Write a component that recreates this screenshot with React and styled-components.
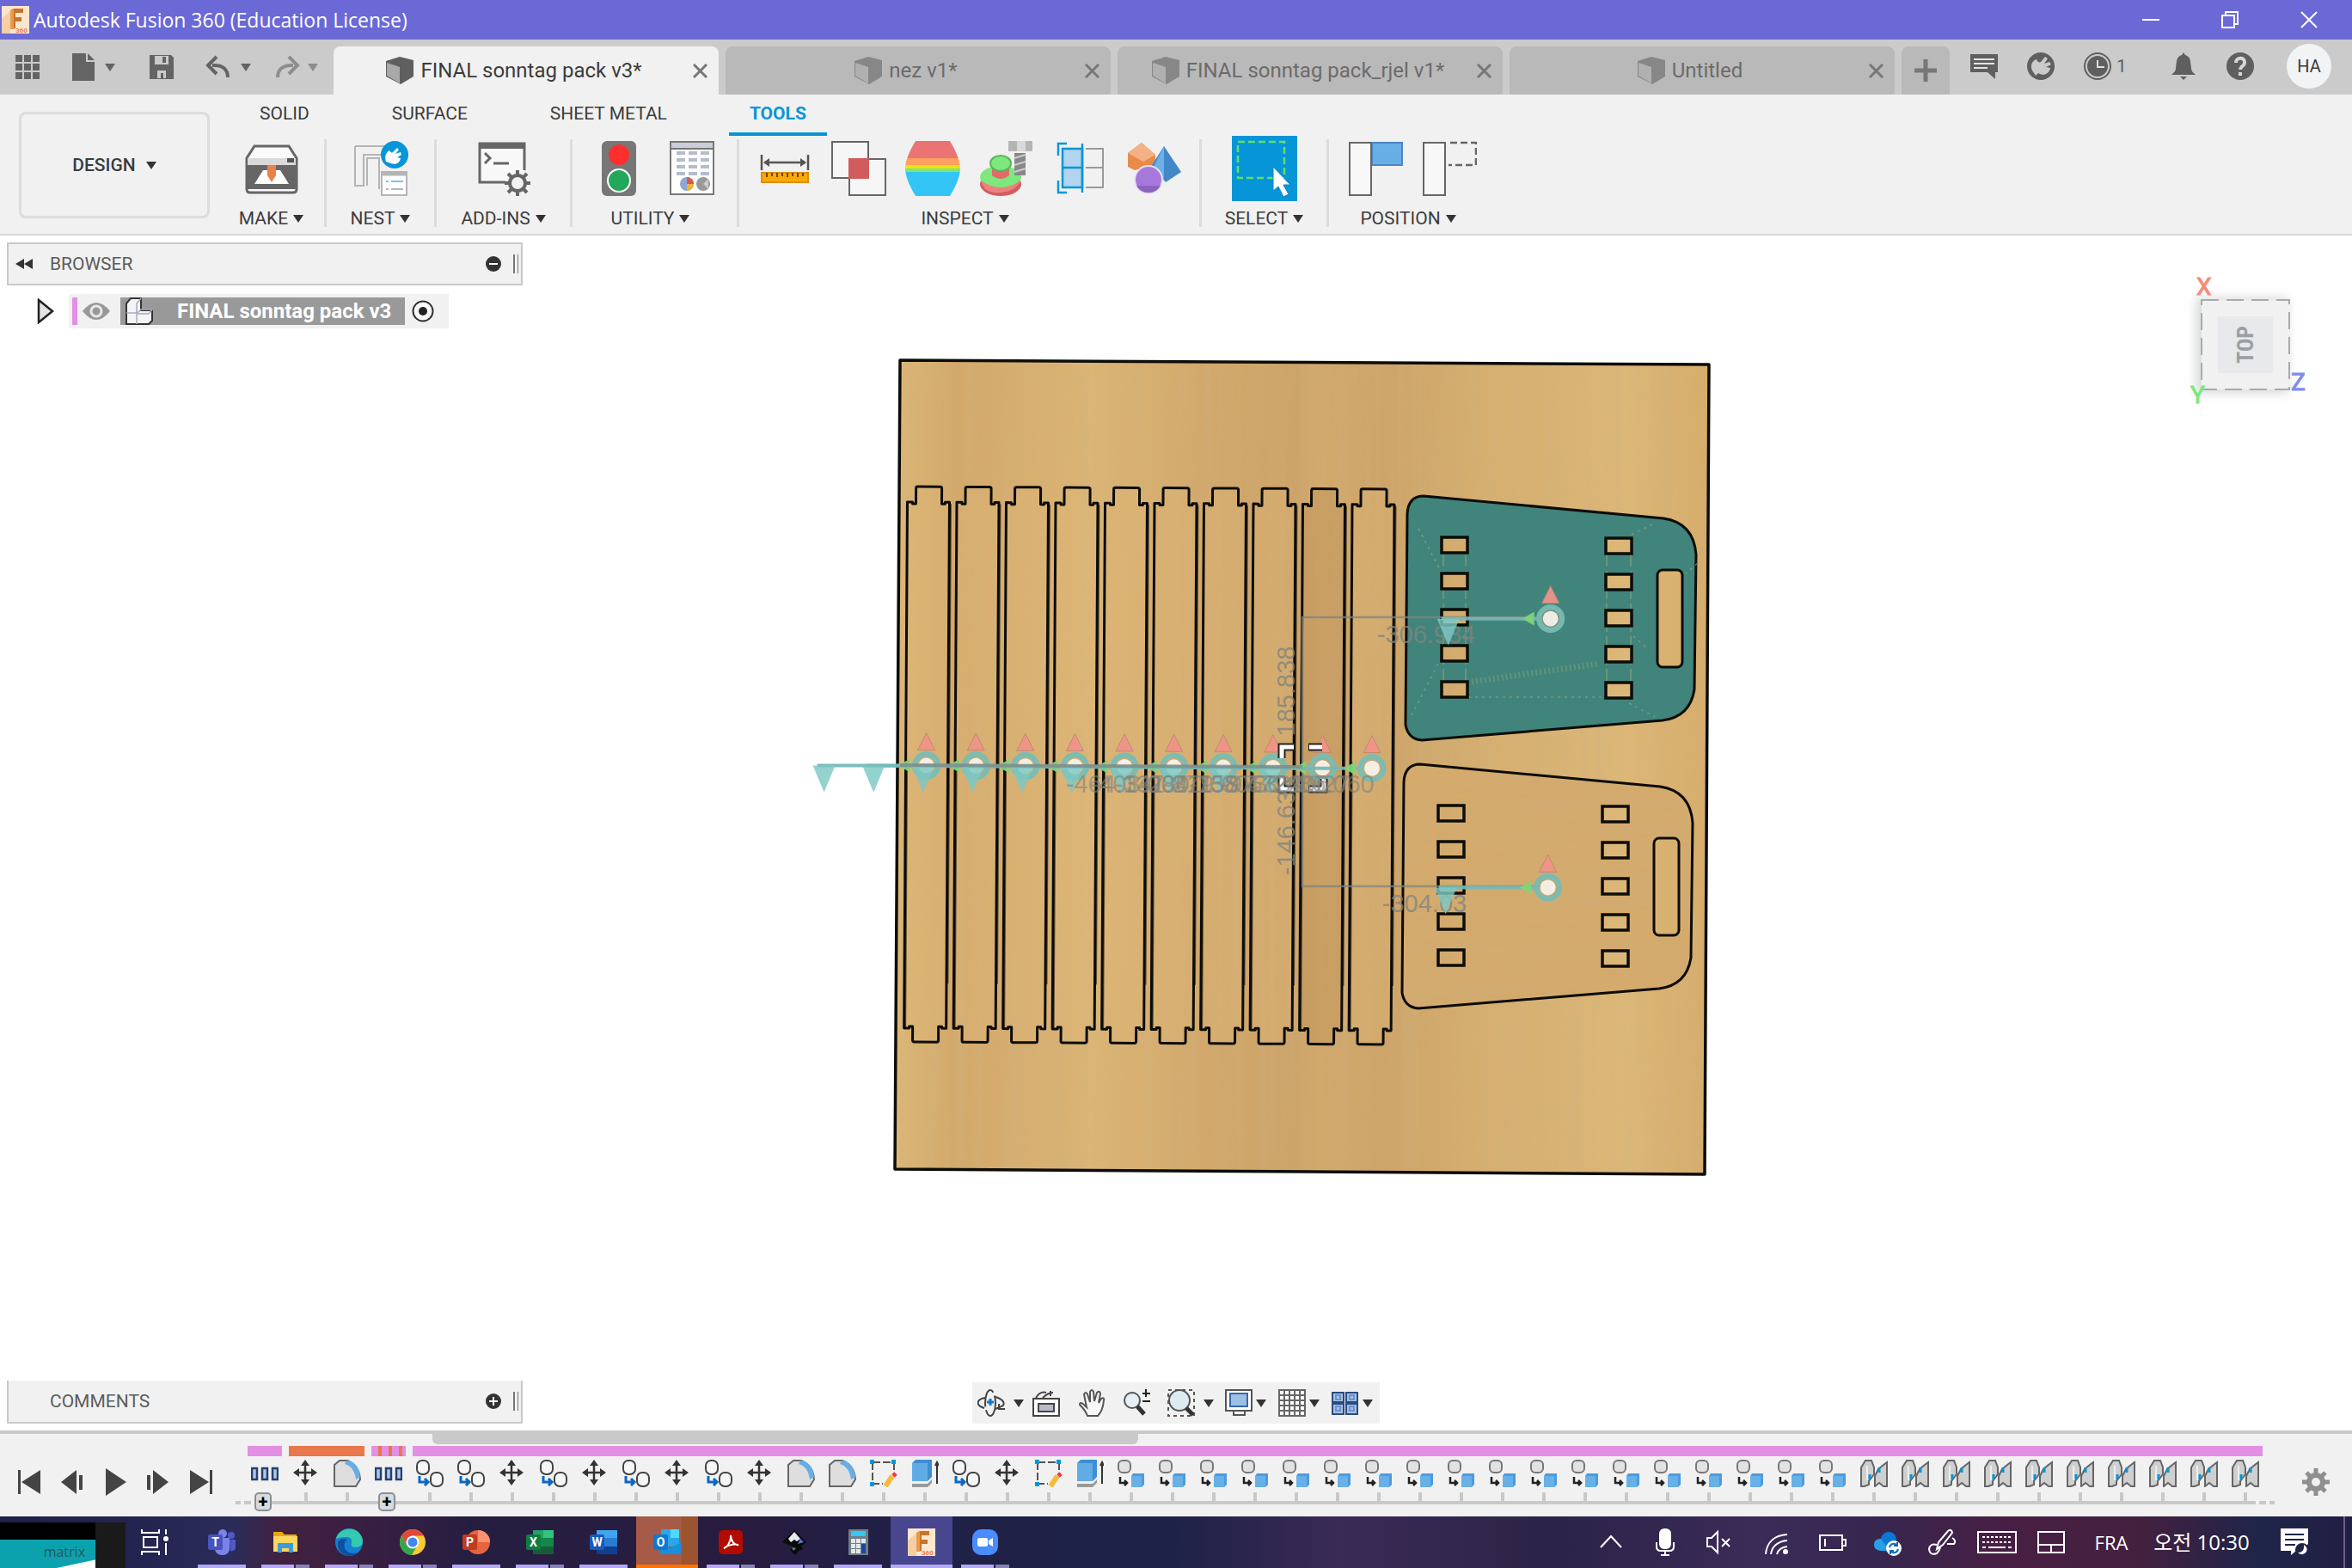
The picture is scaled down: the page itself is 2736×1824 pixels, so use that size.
import React from "react";
import styled, { createGlobalStyle } from "styled-components";

const UI = `Roboto, "Liberation Sans", sans-serif`;
const SYS = `"Open Sans", "Noto Sans", "Noto Sans CJK KR", sans-serif`;

const Global = createGlobalStyle`
  * { box-sizing: border-box; }
  html, body { margin: 0; padding: 0; }
  body { background: #fff; font-family: ${UI}; font-size: 21px; line-height: 24px; color: #3c3c3c; }
  button { font: inherit; color: inherit; border: 0; padding: 0; margin: 0; background: none; }
  svg { display: block; flex: none; }
`;

const Page = styled.div`
  display: flex;
  flex-direction: column;
  height: 100vh;
  overflow: hidden;
`;

/* ---------- title bar ---------- */
const TitleBar = styled.header`
  display: flex;
  align-items: center;
  height: 46px;
  padding: 0 4px 0 2px;
  background: #6b69d6;
  color: #fff;
  font-family: ${SYS};
  white-space: nowrap;
`;
const AppTitle = styled.h1`
  flex: 1;
  margin: 0 0 0 5px;
  font-size: 23px;
  font-weight: 400;
`;
const WindowButton = styled.button`
  display: grid;
  place-items: center;
  width: 92px;
  height: 46px;
`;

/* ---------- document tabs ---------- */
const TabRow = styled.div`
  display: flex;
  height: 64px;
  background: #cbcbcb;
  color: #646464;
`;
const QuickTools = styled.div`
  display: flex;
  align-items: center;
  width: 388px;
  padding: 0 0 0 16px;
`;
const ToolSlot = styled.button`
  display: flex;
  align-items: center;
  gap: ${(p) => p.$gap || 8}px;
  width: ${(p) => p.$w}px;
  opacity: ${(p) => (p.$dim ? 0.6 : 1)};
`;
const Caret = styled.span`
  display: inline-block;
  flex: none;
  border: solid transparent;
  border-width: 9px 6px 0;
  border-top-color: ${(p) => p.$color || "#333"};
`;
const Tabs = styled.nav`
  display: flex;
  flex: 1;
  align-items: flex-end;
  gap: 8px;
`;
const DocTab = styled.div`
  display: flex;
  flex: 1;
  align-items: center;
  height: 56px;
  padding-left: 15px;
  border-radius: 8px 8px 0 0;
  background: ${(p) => (p.$active ? "#f1f1f1" : "#b9b9b9")};
  color: ${(p) => (p.$active ? "#3c3c3c" : "#6b6b6b")};
`;
const DocName = styled.button`
  display: flex;
  flex: 1;
  align-items: center;
  justify-content: center;
  gap: 8px;
  height: 56px;
  font-size: 24px;
  white-space: nowrap;
`;
const TabClose = styled.button`
  display: grid;
  place-items: center;
  width: 43px;
  height: 56px;
  color: #777;
`;
const NewTab = styled.button`
  display: grid;
  place-items: center;
  width: 56px;
  height: 56px;
  border-radius: 8px 8px 0 0;
  background: #b9b9b9;
  color: #777;
`;
const Status = styled.div`
  display: flex;
  align-items: center;
  width: 468px;
  padding: 0 24px 2px 24px;
`;
const StatusButton = styled.button`
  display: flex;
  align-items: center;
  gap: 6px;
  width: ${(p) => p.$w || 66}px;
  height: 40px;
  color: #5f5f5f;
`;
const Avatar = styled.button`
  display: grid;
  place-items: center;
  width: 52px;
  height: 52px;
  border-radius: 50%;
  background: #f1f3f5;
  color: #3c3c3c;
  font-size: 20px;
  margin-left: 4px;
`;

/* ---------- ribbon ---------- */
const Ribbon = styled.section`
  display: flex;
  height: 164px;
  border-bottom: 2px solid #dadada;
  background: #f1f1f1;
`;
const Workspace = styled.button`
  display: flex;
  align-items: center;
  justify-content: center;
  gap: 12px;
  width: 222px;
  height: 124px;
  margin: 20px 10px 0 22px;
  border: 3px solid #dcdcdc;
  border-radius: 8px;
  font-weight: 500;
`;
const RibbonMain = styled.div`
  display: flex;
  flex: 1;
  flex-direction: column;
`;
const RibbonTabs = styled.div`
  display: flex;
  gap: 48px;
  height: 50px;
  padding-left: 24px;
`;
const RibbonTab = styled.button`
  height: 48px;
  padding: 0 24px;
  border-bottom: 4px solid ${(p) => (p.$active ? "#0696d7" : "transparent")};
  color: ${(p) => (p.$active ? "#0696d7" : "#3c3c3c")};
  font-weight: ${(p) => (p.$active ? 700 : 400)};
  white-space: nowrap;
`;
const Groups = styled.div`
  display: flex;
  height: 104px;
`;
const Group = styled.div`
  display: flex;
  flex-direction: column;
  align-items: center;
  width: ${(p) => p.$w}px;
  margin-top: 2px;
  border-right: ${(p) => (p.$last ? 0 : 3)}px solid #dcdcdc;
`;
const GroupIcons = styled.div`
  display: flex;
  flex: none;
  align-items: center;
  gap: 22px;
  height: 68px;
`;
const IconButton = styled.button`
  display: grid;
  flex: none;
  place-items: center;
  width: ${(p) => (p.$selected ? 76 : 64)}px;
  height: ${(p) => (p.$selected ? 76 : 64)}px;
  background: ${(p) => (p.$selected ? "#0696d7" : "none")};
`;
const GroupLabel = styled.button`
  display: flex;
  flex: none;
  align-items: center;
  gap: 6px;
  margin-top: 12px;
  padding-right: ${(p) => (p.$wide ? 10 : 0)}px;
  white-space: nowrap;
`;

/* ---------- canvas ---------- */
const Canvas = styled.main`
  display: grid;
  flex: 1;
  min-height: 0;
  background: #fff;
  & > * { grid-area: 1 / 1; }
`;
const Model = styled.svg`
  width: 100%;
  height: 100%;
`;
const Cube = styled.svg`
  justify-self: end;
  margin: 26px 40px 0 0;
  width: 160px;
  height: 180px;
`;
const BrowserPanel = styled.aside`
  align-self: start;
  width: 600px;
  margin: 8px 0 0 8px;
`;
const PanelHead = styled.div`
  display: flex;
  align-items: center;
  height: 50px;
  padding: 0 3px 0 8px;
  border: 2px solid #c9c9c9;
  border-top-width: ${(p) => (p.$flat ? 0 : 2)}px;
  background: #f1f1f1;
  color: #5c5c5c;
`;
const PanelTitle = styled.h2`
  flex: 1;
  margin: 0;
  font-size: 21px;
  font-weight: 400;
`;
const HeadSlot = styled.button`
  display: flex;
  align-items: center;
  width: ${(p) => p.$w}px;
  height: 40px;
  color: #333;
`;
const Grip = styled.span`
  width: 6px;
  height: 22px;
  border: solid #777;
  border-width: 0 1px 0 2px;
`;
const TreeRow = styled.div`
  display: flex;
  align-items: center;
  height: 40px;
  margin: 10px 0 0 34px;
`;
const Node = styled.div`
  display: flex;
  align-items: center;
  width: 442px;
  height: 40px;
  margin-left: 16px;
  padding-left: 4px;
  background: #f1f1f1;
`;
const Stripe = styled.span`
  width: 6px;
  height: 32px;
  background: #e38fe3;
  margin-right: 6px;
`;
const NodeName = styled.button`
  display: flex;
  align-items: center;
  gap: 28px;
  width: 331px;
  height: 32px;
  margin: 0 8px 0 12px;
  padding-left: 6px;
  background: #999;
  color: #fff;
  font-size: 24px;
  font-weight: 700;
  white-space: nowrap;
`;
const CommentsPanel = styled.aside`
  align-self: end;
  width: 600px;
  margin: 0 0 8px 8px;
`;
const NavBar = styled.div`
  display: flex;
  place-self: end center;
  align-items: center;
  height: 48px;
  margin: 0 0 8px 0;
  padding: 0 6px;
  background: #f1f1f1;
`;
const NavButton = styled.button`
  display: flex;
  align-items: center;
  gap: ${(p) => p.$gap || 4}px;
  width: ${(p) => p.$w}px;
  height: 48px;
`;

/* ---------- timeline ---------- */
const Timeline = styled.footer`
  display: flex;
  flex-direction: column;
  height: 100px;
  border-top: 4px solid #c9c9c9;
  background: #f1f1f1;
`;
const ScrollRow = styled.div`
  height: 12px;
`;
const Thumb = styled.div`
  width: 30%;
  height: 12px;
  margin-left: 18.4%;
  border-radius: 0 0 6px 6px;
  background: #c9c9c9;
`;
const TimelineBody = styled.div`
  display: flex;
  flex: 1;
  padding: 2px 22px 0 18px;
`;
const Playback = styled.div`
  display: flex;
  align-items: center;
  gap: 18px;
  width: 254px;
  height: 84px;
`;
const PlayButton = styled.button`
  display: grid;
  place-items: center;
  width: 32px;
  height: 40px;
  color: #444;
`;
const Track = styled.div`
  width: 2376px;
  flex: none;
`;
const Bars = styled.div`
  display: grid;
  grid-template-columns: repeat(49, 48px);
  padding-left: 16px;
`;
const Bar = styled.div`
  grid-column: span ${(p) => p.$span};
  height: 12px;
  margin-right: 8px;
  background: ${(p) => p.$fill};
`;
const Features = styled.div`
  display: flex;
  padding: 4px 0 6px 16px;
`;
const Feature = styled.button`
  display: grid;
  place-items: center;
  width: 40px;
  height: 32px;
  margin-right: 8px;
`;
const AXIS = "linear-gradient(#c9c9c9, #c9c9c9)";
const Axis = styled.div`
  display: flex;
  height: 22px;
  padding-left: 16px;
  background:
    ${AXIS} 2px 10px / 6px 4px no-repeat,
    ${AXIS} 12px 10px / 8px 4px no-repeat,
    ${AXIS} 24px 10px / 2328px 4px no-repeat,
    ${AXIS} 2356px 10px / 8px 4px no-repeat,
    ${AXIS} 2368px 10px / 6px 4px no-repeat;
`;
const AxisCell = styled.div`
  display: flex;
  justify-content: center;
  width: 40px;
  margin-right: 8px;
`;
const Tick = styled.span`
  width: 4px;
  height: 10px;
  background: #c9c9c9;
`;
const Expand = styled.button`
  width: 20px;
  height: 22px;
  margin-right: 4px;
  border: 2px solid #8c8f93;
  border-radius: 5px;
  background: #d8dadc;
  color: #000;
  font-size: 20px;
  font-weight: 700;
  line-height: 16px;
`;
const Settings = styled.button`
  display: grid;
  place-items: center;
  width: 40px;
  height: 84px;
  margin-left: auto;
  color: #8f8f8f;
`;

/* ---------- task bar ---------- */
const TaskBar = styled.div`
  display: flex;
  height: 60px;
  background: linear-gradient(90deg, #1d2148 0, #23244f 6%, #2b2c59 10%, #42213f 12%, #3a1f42 15%, #261e41 20%, #271c40 32%, #1f2147 40%, #1f2248 50%, #3a2a56 57%, #2e2549 64%, #2b2348 66%, #3b2b58 75%, #37264f 80%, #481f44 85%, #44203f 91%, #1e2549 96%, #211f42 100%);
  color: #fff;
  font-family: ${SYS};
  font-size: 22px;
`;
const Peek = styled.div`
  width: 146px;
  margin-top: 7px;
  background: #1b1a1b;
`;
const PeekScreen = styled.div`
  display: flex;
  justify-content: flex-end;
  width: 111px;
  height: 53px;
  padding: 0 12px 0 0;
  border-top: 20px solid #000;
  background: linear-gradient(168deg, #0ba2ad 82%, #fff 84%);
  color: #24585f;
  font-size: 16px;
  line-height: 28px;
`;
const TaskView = styled.button`
  display: grid;
  place-items: center;
  width: 68px;
  height: 60px;
`;
const Apps = styled.div`
  display: flex;
  gap: 2px;
  padding-left: 8px;
`;
const AppButton = styled.button`
  display: flex;
  flex-direction: column;
  align-items: center;
  justify-content: flex-end;
  width: 72px;
  height: 60px;
  background: ${(p) => p.$bg || "none"};
`;
const Runner = styled.span`
  display: flex;
  gap: 2px;
  width: ${(p) => (p.$wide ? 72 : 56)}px;
  height: 4px;
  margin-top: 10px;
  &::before { content: ""; flex: 1; background: ${(p) => p.$color || "#b3a8f5"}; }
  &::after { content: ""; width: 16px; background: #8583b8; display: ${(p) => (p.$split ? "block" : "none")}; }
`;
const Tray = styled.div`
  display: flex;
  align-items: center;
  margin-left: auto;
  padding-right: 8px;
`;
const TrayButton = styled.button`
  display: grid;
  place-items: center;
  width: ${(p) => p.$w || 64}px;
  height: 60px;
  font-size: ${(p) => (p.$clock ? 24 : 22)}px;
  white-space: nowrap;
`;
const ShowDesktop = styled.button`
  width: 2px;
  height: 60px;
  margin-left: 14px;
  background: #6d5f86;
`;

/* ---------- icons ---------- */
const Svg = ({ s = 32, w, h, vb, children, ...r }) => (
  <svg width={w || s} height={h || s} viewBox={vb || "0 0 32 32"} fill="none" stroke="currentColor" strokeWidth="2" aria-hidden="true" {...r}>
    {children}
  </svg>
);

const FusionIcon = () => (
  <Svg stroke="none">
    <rect width="32" height="32" fill="#fbe6cf" />
    <path d="M0 14l10-8v26H0z" fill="#f4cfa5" />
    <path d="M10 5l4-2h11v5h-9v5h7v5h-7v8l-6 1z" fill="#c8752a" />
    <path d="M10 5l4-2v24l-4 0z" fill="#e69a4b" />
    <text x="16" y="31" fontSize="8" fontWeight="700" fill="#e8824a" fontFamily="Roboto">360</text>
  </Svg>
);
const CubeIcon = ({ dim }) => (
  <Svg stroke="none" opacity={dim ? 0.55 : 1}>
    <path d="M0 5L16 0l16 4v19L17 32 0 23z" fill="#5f5f5f" />
    <path d="M1 7l15 5v19L1 22z" fill="#a9a9a9" />
  </Svg>
);
const CloseIcon = () => <Svg s={17} vb="0 0 17 17" strokeWidth="3"><path d="M1 1l15 15M16 1L1 16" /></Svg>;

const MakeIcon = () => (
  <Svg s={64} vb="0 0 64 64" stroke="none">
    <path d="M12 6h40l9 14v36q0 4-4 4H7q-4 0-4-4V20z" fill="#fafafa" stroke="#666" strokeWidth="3" />
    <path d="M4 20h56v8H4z" fill="#d9d9d9" /><path d="M50 20h8v5h-8z" fill="#555" />
    <rect x="4" y="28" width="56" height="28" fill="#666" />
    <path d="M12 50L22 34h6l4 12 4-12h6l10 16z" fill="#fff" /><path d="M27 28h10v12l-5 8-5-8z" fill="#e8824a" />
  </Svg>
);
const NestIcon = () => (
  <Svg s={64} vb="0 0 64 64" stroke="#b5b5b5">
    <path d="M2 6h38v8M2 6v46h10V16h20M16 52V20h14v36" />
    <rect x="33" y="36" width="29" height="27" fill="#fff" /><path d="M33 38h29" strokeWidth="5" />
    <path d="M38 47h3M44 47h14" stroke="#7cc0ee" /><path d="M38 56h3M44 56h14" />
    <circle cx="48" cy="16" r="16" fill="#0696d7" stroke="none" />
    <path d="M38 24c-2-6 0-11 4-13 2 3 3 3 4 2l5-5 2 2-4 5 6-2 1 3-5 3 4 1c-1 6-6 8-11 6z" fill="#fff" stroke="none" />
  </Svg>
);
const AddinsIcon = () => (
  <Svg s={64} vb="0 0 64 64" stroke="#666" strokeWidth="3">
    <path d="M56 34V3H4v45h30" fill="#f8f8f8" /><path d="M4 6h52" strokeWidth="6" />
    <path d="M10 14l6 6-6 6M20 26h18" />
    <circle cx="48" cy="49" r="9" strokeWidth="4" />
    <g strokeWidth="4"><path d="M48 34v6M48 58v6M33 49h6M57 49h6M37 38l5 5M54 55l5 5M37 60l5-5M54 43l5-5" /></g>
  </Svg>
);
const LightIcon = () => (
  <Svg s={64} vb="0 0 64 64">
    <rect x="13" y="0" width="40" height="64" rx="6" fill="#777" stroke="none" />
    <circle cx="33" cy="16" r="12" fill="#ff2f2f" stroke="none" /><circle cx="33" cy="46" r="13" fill="#22a85a" stroke="#fff" />
  </Svg>
);
const SheetIcon = () => (
  <Svg s={64} vb="0 0 64 64">
    <rect x="7" y="1" width="50" height="61" fill="#fff" stroke="#777" /><path d="M8 5h48" stroke="#c9cedb" strokeWidth="6" />
    <path d="M8 9h48" stroke="#777" />
    <path d="M14 14h38M14 22h38M14 30h38M14 38h38" stroke="#b4bdcf" strokeWidth="4" strokeDasharray="10 4" />
    <circle cx="26" cy="50" r="8" fill="#8fa5d8" stroke="none" /><path d="M26 50v8a8 8 0 008-8z" fill="#f0b52c" stroke="none" /><path d="M26 50V42a8 8 0 018 8z" fill="#d45a4a" stroke="none" />
    <circle cx="45" cy="50" r="8" fill="#999" stroke="none" /><path d="M45 50l6-6v12z" fill="#ccc" stroke="none" />
  </Svg>
);
const MeasureIcon = () => (
  <Svg s={64} vb="0 0 64 64" stroke="#555">
    <path d="M5 16v18M59 16v18M8 25h48" strokeWidth="2.5" /><path d="M14 20l-7 5 7 5zM50 20l7 5-7 5z" fill="#555" stroke="none" />
    <rect x="5" y="37" width="54" height="11" fill="#fba90a" stroke="#e08e00" /><path d="M11 37v5M17 37v4M23 37v5M29 37v4M35 37v5M41 37v4M47 37v5M53 37v4" stroke="#6b4500" />
  </Svg>
);
const InterfereIcon = () => (
  <Svg s={64} vb="0 0 64 64" stroke="#666">
    <rect x="1" y="1" width="42" height="42" fill="#f6f6f6" /><rect x="21" y="21" width="42" height="42" fill="#f6f6f6" /><rect x="20" y="20" width="24" height="24" fill="#d05c5c" stroke="none" />
  </Svg>
);
const CurvatureIcon = () => (
  <Svg s={64} vb="0 0 64 64" stroke="none">
    <clipPath id="barrel"><path d="M12 0h40q12 20 12 32T52 64H12Q0 44 0 32T12 0z" /></clipPath>
    <g clipPath="url(#barrel)"><path d="M0 0h64v20H0z" fill="#ea7474" /><path d="M0 20h64v8H0z" fill="#ffa060" /><path d="M0 28h64v4H0z" fill="#eee212" /><path d="M0 32h64v4H0z" fill="#78e878" /><path d="M0 36h64v28H0z" fill="#33c5f5" /></g>
  </Svg>
);
const DraftIcon = () => (
  <Svg s={64} vb="0 0 64 64" stroke="none">
    <ellipse cx="25" cy="50" rx="24" ry="14" fill="#d45c5c" /><ellipse cx="25" cy="42" rx="24" ry="13" fill="#7de87d" /><path d="M2 46q23 16 46 0-4 12-23 14T2 46z" fill="#f08080" />
    <path d="M15 28h20v12q-10 8-20 0z" fill="#e26a6a" /><ellipse cx="25" cy="26" rx="12" ry="9" fill="#7de87d" stroke="#58b458" strokeWidth="2" />
    <rect x="34" y="0" width="28" height="12" fill="#b5b5b5" /><rect x="44" y="0" width="10" height="12" fill="#d9d9d9" /><rect x="41" y="14" width="13" height="26" fill="#888" /><path d="M41 20l13-4M41 28l13-4M41 36l13-4" stroke="#ccc" strokeWidth="2" />
  </Svg>
);
const SectionIcon = () => (
  <Svg s={64} vb="0 0 64 64">
    <rect x="11" y="9" width="23" height="45" fill="#b2d4ee" stroke="#0696d7" strokeWidth="2.5" /><path d="M11 31h23M34 3v57M16 3H6v14M6 46v14h10" stroke="#0696d7" strokeWidth="2.5" />
    <path d="M38 9h20v22H38M38 31h20v23H38" stroke="#999" />
  </Svg>
);
const ShapesIcon = () => (
  <Svg s={64} vb="0 0 64 64" stroke="none">
    <path d="M17 2l16 14v12L9 34 1 30V14z" fill="#e88b4a" /><path d="M17 2l16 14-14 8L1 14z" fill="#f4b183" />
    <path d="M43 6l20 30-18 12-16-20z" fill="#4288c8" /><path d="M43 6L29 34l14 12z" fill="#6cb0e6" />
    <circle cx="25" cy="45" r="16" fill="#a678dc" stroke="#e9e0f4" strokeWidth="2" /><path d="M11 52a16 16 0 0028 0z" fill="#8a63bf" />
  </Svg>
);
const SelectIcon = () => (
  <Svg s={76} vb="0 0 76 76">
    <rect x="7" y="7" width="54" height="42" stroke="#66dd66" strokeWidth="2.5" strokeDasharray="8 4" />
    <path d="M48 36v28l6-5 6 12 6-3-6-11h8z" fill="#fff" stroke="#0686c4" strokeWidth="1" />
  </Svg>
);
const CaptureIcon = () => (
  <Svg s={64} vb="0 0 64 64"><rect x="28" y="2" width="35" height="26" fill="#68aee6" stroke="#4a86c2" /><rect x="2" y="2" width="25" height="61" fill="#f8f8f8" stroke="#666" /></Svg>
);
const RevertIcon = () => (
  <Svg s={64} vb="0 0 64 64" stroke="#666"><rect x="2" y="2" width="25" height="61" fill="#f8f8f8" /><path d="M33 2h30v26H31" strokeDasharray="8 4" strokeWidth="2.5" /></Svg>
);

/* timeline feature glyphs */
const glyphs = {
  pattern: <g fill="#a9c8ec" stroke="#27406e" strokeWidth="2.5"><rect x="1" y="10" width="6" height="13" /><rect x="13" y="10" width="6" height="13" /><rect x="25" y="10" width="6" height="13" /></g>,
  move: <g stroke="#333" strokeWidth="2.5"><path d="M15 4v22M4 15h22" /><path fill="#333" stroke="none" d="M15 0l5 7H10zM15 30l5-7H10zM1 15l7-5v10zM29 15l-7-5v10z" /></g>,
  fillet: <g><path d="M1 31V6l6-5h9q14 6 15 22l-5 8z" fill="#dedede" stroke="#666" /><path d="M15 1q14 1 16 19l-5 3Q24 8 13 5z" fill="#68aee6" stroke="none" /></g>,
  copy: <g stroke="#444"><rect x="1" y="1" width="14" height="16" rx="6" fill="#f6f6f6" /><rect x="17" y="15" width="14" height="16" rx="6" fill="#f6f6f6" /><path d="M4 19v7h9M10 22l4 4-4 4" stroke="#0b66c3" strokeWidth="3" /></g>,
  body: <g><rect x="1" y="1" width="14" height="14" rx="5" fill="#e2e2e2" stroke="#777" /><path d="M18 16h13v13l-3 3H16V19z" fill="#4b9be0" stroke="none" /><path d="M16 19h12v13H16z" fill="#68b0e8" stroke="none" /><path d="M3 20v7h8M8 24l3 3-3 3" stroke="#222" strokeWidth="2.5" /></g>,
  sketch: <g stroke="#555"><path d="M3 3h25M3 3v25h12M28 3v14" strokeDasharray="9 3" /><g fill="#0696d7" stroke="none"><path d="M0 0h5v5H0zM25 0h5v5h-5zM0 26h5v5H0z" /></g><path d="M18 31l8-12" stroke="#f6bb3a" strokeWidth="6" /><path d="M27 19l3-3" stroke="#f03c3c" strokeWidth="5" /></g>,
  extrude: <g><path d="M1 4l4-4h19v20l-5 5H1z" fill="#3f8ed4" stroke="none" /><path d="M1 4h18v21H1z" fill="#62ace6" stroke="none" /><path d="M1 28h18l5-5v4l-5 5H1z" fill="#999" stroke="none" /><path d="M30 28V4M28 7l2-4 2 4" stroke="#333" /></g>,
  joint: <g stroke="#666"><path d="M1 31V9l5-8h7l3 8v8l-6 8v4l-5 2z" fill="#cfcfcf" /><path d="M8 7v17" stroke="#eee" /><path d="M31 31V3l-4 3-6 5-4 8v12l5-4 5 4z" fill="#cfcfcf" /><path d="M11 17v6M22 9v6" stroke="#0696d7" strokeWidth="3" /></g>,
};
const featureKinds = [
  "pattern", "move", "fillet", "pattern", "copy", "copy", "move", "copy", "move", "copy", "move", "copy", "move",
  "fillet", "fillet", "sketch", "extrude", "copy", "move", "sketch", "extrude",
  ...Array(18).fill("body"), ...Array(10).fill("joint"),
];

/* ---------- model ---------- */
const PLANK = "M0 0h6v2h4v-18q0-2 2-2h26q2 0 2 2v18h4v-2h5V612h-5v-2h-4v16q0 2-2 2h-26q-2 0-2-2v-16h-4v2H0z";
const PLATE = "M1637 598Q1638 577 1656 577L1935 603Q1970 608 1973 645L1971 802Q1966 834 1934 838L1654 861Q1638 860 1635 843Z";
const SHEET = "M1047 419L1988 424L1983 1366L1041 1360Z";
const SLOT_ROWS = [0, 1, 2, 3, 4];
const plankIndexes = Array.from({ length: 10 }, (_, i) => i);

const Slots = () => (
  <g>
    {SLOT_ROWS.map((r) => (
      <g key={r} stroke="#0c0c08" strokeWidth="3.500" fill="url(#wood)">
        <rect x="1677" y={625 + r * 42} width="30" height="18" />
        <rect x="1868" y={626 + r * 42} width="30" height="18" />
      </g>
    ))}
    <rect x="1928" y="663" width="29" height="113" rx="6" fill="url(#wood)" stroke="#0c0c08" strokeWidth="3" />
  </g>
);
const Joint = ({ x, y, reach = 119 }) => (
  <g opacity="0.94">
    <path d={`M${x - reach - 8} ${y}H${x - 12}`} stroke="#74b9b8" strokeWidth="4" />
    <path d={`M${x} ${y - 38}l10 20h-20z`} fill="#f29389" stroke="#b98a70" strokeWidth="1" />
    <path d={`M${x - 33} ${y}l14-8v16z`} fill="#7fd67a" />
    <circle cx={x} cy={y} r="13.500" stroke="#78bdb4" strokeWidth="6" fill="#b9a27a" fillOpacity="0.500" />
    <circle cx={x} cy={y} r="9" fill="#f8f3ec" />
  </g>
);
const Funnel = ({ x, y }) => <path d={`M${x - 132} ${y}h26l-13 31z`} fill="#7cc8c5" fillOpacity="0.82" />;

const Workpiece = () => (
  <Model viewBox="0 274 2736 1390" role="img" aria-label="Cutting layout">
    <defs>
      <linearGradient id="wood" gradientUnits="userSpaceOnUse" x1="1042" x2="1988" y1="0" y2="0">
        <stop offset="0" stopColor="#dcb777" /><stop offset="0.07" stopColor="#d3a96b" /><stop offset="0.13" stopColor="#d5ac6e" />
        <stop offset="0.24" stopColor="#dbb575" /><stop offset="0.38" stopColor="#d2a86c" /><stop offset="0.49" stopColor="#cca368" />
        <stop offset="0.52" stopColor="#d2a96d" /><stop offset="0.6" stopColor="#cda469" /><stop offset="0.72" stopColor="#d5ae70" />
        <stop offset="0.9" stopColor="#dcb778" /><stop offset="1" stopColor="#d6ac6a" />
      </linearGradient>
      <filter id="grain" x="0" y="0" width="1" height="1">
        <feTurbulence type="fractalNoise" baseFrequency="0.09 0.002" numOctaves="3" seed="4" />
        <feColorMatrix values="0 0 0 0 0.62  0 0 0 0 0.44  0 0 0 0 0.22  1.3 0 0 0 -0.52" />
      </filter>
      <filter id="cross" x="0" y="0" width="1" height="1">
        <feTurbulence type="fractalNoise" baseFrequency="0.004 0.06" numOctaves="2" seed="9" />
        <feColorMatrix values="0 0 0 0 0.62  0 0 0 0 0.44  0 0 0 0 0.22  1.3 0 0 0 -0.52" />
      </filter>
      <clipPath id="plate"><path d={PLATE} /></clipPath>
    </defs>
    <path d={SHEET} fill="url(#wood)" />
    <rect x="1047" y="424" width="936" height="936" filter="url(#grain)" opacity="0.6" />
    <path d={SHEET} fill="none" stroke="#0c0c08" strokeWidth="3.500" strokeLinejoin="round" />

    {plankIndexes.map((i) => (
      <g key={i} transform={`translate(${1055.5 + i * 57.5} ${584 + i * 0.3}) rotate(0.36)`} fill="none">
        <path d={PLANK} stroke="#0c0c08" strokeWidth="3" strokeLinejoin="round" fill={i === 8 ? "#b98d54" : "#dfb877"} fillOpacity="0.35" />
        <path d="M1 300V612M50 2V560" stroke="#0c0c08" strokeWidth="3" opacity="0.6" />
      </g>
    ))}

    <path d={PLATE} fill="#41847b" stroke="#0c0c08" strokeWidth="3" />
    <g stroke="#8fa877" strokeWidth="1.5" opacity="0.7" fill="none">
      <path d="M1679 645V810M1705 645V810M1869 645V810M1897 645V810" strokeDasharray="14 5" />
      <path d="M1650 615L1678 668M1642 832L1675 768M1700 811H1866M1898 622L1922 610M1900 740L1918 756M1960 668L1975 655M1895 818L1925 834" strokeDasharray="3 5" />
      <path d="M1712 793L1860 772" strokeWidth="7" strokeDasharray="2 3" opacity="0.6" />
    </g>
    <Slots />
    <g transform="translate(-4 312)">
      <path d={PLATE} fill="#d4aa6d" />
      <g clipPath="url(#plate)"><rect x="1630" y="574" width="346" height="290" filter="url(#cross)" opacity="0.5" /></g>
      <path d={PLATE} fill="none" stroke="#0c0c08" strokeWidth="3" />
      <Slots />
    </g>

    <g fill="#80847f" fillOpacity="0.8" fontFamily="Liberation Sans, Arial, sans-serif" fontSize="29" textAnchor="middle">
      <text x="1659" y="748">-306.934</text>
      <text x="1657" y="1061">-304.03</text>
      <text transform="translate(1506 804) rotate(-90)">185.838</text>
      <text transform="translate(1506 961) rotate(-90)">-146.634</text>
    </g>
    <path d="M1804 718H1515V1031H1800" stroke="#80847c" strokeWidth="2.5" fill="none" opacity="0.75" />

    {plankIndexes.map((i) => <Joint key={i} x={1077.6 + i * 57.6} y={890.5 + i * 0.35} />)}
    {plankIndexes.map((i) => <Funnel key={i} x={1077.6 + i * 57.6} y={890.5 + i * 0.35} />)}
    <Joint x={1803.7} y={719.7} />
    <Funnel x={1803.7} y={719.7} />
    <Joint x={1800.6} y={1032.4} />
    <Funnel x={1800.6} y={1032.4} />
    <path d="M1047 890L1515 892" stroke="#7d8c8a" strokeWidth="4" opacity="0.8" />

    <g fill="none">
      <path d="M1491 882V869H1506M1522 869H1538M1491 904V918H1506M1522 918H1540V906" stroke="#222" strokeWidth="9" />
      <path d="M1491 882V869H1505M1523 869H1538M1491 904V918H1505M1523 918H1540V906" stroke="#fff" strokeWidth="5" />
    </g>
    <g fill="#80847f" fillOpacity="0.65" fontFamily="Liberation Sans, Arial, sans-serif" fontSize="29" textAnchor="middle">
      {plankIndexes.map((i) => (
        <text key={i} x={1297 + i * 28.6} y="922">{(-464.137 + i * 61.133).toFixed(3)}</text>
      ))}
    </g>
  </Model>
);

const ViewCube = () => (
  <Cube viewBox="2536 300 160 180" role="img" aria-label="View cube">
    <defs><filter id="soft" x="-0.3" y="-0.3" width="1.6" height="1.6"><feGaussianBlur stdDeviation="6" /></filter></defs>
    <rect x="2554" y="346" width="108" height="112" fill="#d9dcdc" filter="url(#soft)" />
    <rect x="2561" y="349" width="102" height="104" fill="#f1f1f1" stroke="#aaa" strokeWidth="2" strokeDasharray="20 9" />
    <rect x="2580" y="368" width="64" height="66" fill="#e7e9eb" />
    <g fontFamily="Roboto, sans-serif" fontSize="28" strokeWidth="1">
      <text transform="translate(2621 401) rotate(-90)" textAnchor="middle" fontSize="26" fontWeight="700" fill="#9b9ea2" fontFamily="Roboto Condensed, Roboto, sans-serif">TOP</text>
      <text x="2555" y="343" fill="#f58a7c" stroke="#f58a7c">X</text>
      <text x="2548" y="469" fill="#7ce87c" stroke="#7ce87c">Y</text>
      <text x="2665" y="454" fill="#7f8df0" stroke="#7f8df0">Z</text>
    </g>
  </Cube>
);

/* ---------- app logos ---------- */
const letterLogo = (letter, dark, body) => (
  <Svg stroke="none">{body}<rect x="0" y="7" width="17" height="18" rx="2" fill={dark} /><text x="8.5" y="21" textAnchor="middle" fontFamily="Roboto" fontWeight="700" fontSize="14" fill="#fff">{letter}</text></Svg>
);
const sheets = (a, b, c, d) => <g><path d="M8 2h12v9H8z" fill={a} /><path d="M20 2h12v9H20z" fill={b} /><path d="M8 11h24v10H8z" fill={c} /><path d="M8 21h24v9H8z" fill={d} /></g>;
const apps = [
  ["Teams", letterLogo("T", "#4b53bc", <g fill="#7b83eb"><circle cx="17" cy="6" r="5" /><circle cx="27" cy="8" r="4" fill="#5059c9" /><path d="M8 11h17v14q-2 6-8 6-7 0-9-6z" /><path d="M25 13h7v10q-2 4-6 3z" fill="#5059c9" /></g>)],
  ["Explorer", <Svg stroke="none" key="e"><path d="M2 4h10l3 3h14v8H2z" fill="#e8a80c" /><path d="M2 9h28v18H2z" fill="#ffd75e" /><path d="M7 17h18v11h-5v-5h-8v5H7z" fill="#3d9be0" /></Svg>, "split"],
  ["Edge", <Svg stroke="none" key="g"><circle cx="16" cy="16" r="16" fill="#1580d0" /><path d="M1 12C5-3 29-4 32 14q0 8-9 8-6-1-4-5 1-7-6-7-8 0-12 2z" fill="#35c9b0" /><path d="M14 13q-6 5-2 12 5 6 14 3-6 6-14 3Q2 28 3 16q4-6 11-3z" fill="#0d4fa0" /></Svg>, "split"],
  ["Chrome", <Svg stroke="none" key="c"><circle cx="16" cy="16" r="15" fill="#fbc934" /><path d="M3 8.5A15 15 0 0129 8.500H16L9 19z" fill="#e04a3a" /><path d="M3 8.500A15 15 0 0015 31l7-12H9z" fill="#35a552" /><circle cx="16" cy="16" r="7.500" fill="#fff" /><circle cx="16" cy="16" r="5.500" fill="#4386f5" /></Svg>, "split"],
  ["PowerPoint", letterLogo("P", "#c03c1e", <g><circle cx="18" cy="16" r="14" fill="#e8633f" /><path d="M18 2a14 14 0 0114 14H18z" fill="#ff9070" /></g>)],
  ["Excel", letterLogo("X", "#107c41", sheets("#21a366", "#33c481", "#16864a", "#185c37")), "split"],
  ["Word", letterLogo("W", "#185abd", sheets("#41a5ee", "#41a5ee", "#2b7cd3", "#103f91"))],
  ["Outlook", letterLogo("O", "#0f78d4", <g><path d="M9 1h21v20H9z" fill="#28a8ea" /><path d="M20 1h10v10H20z" fill="#50d9ff" /><path d="M8 16l12 7 12-7v14H8z" fill="#1490df" /></g>), "orange"],
  ["Acrobat", <Svg key="a" stroke="#fff"><rect x="2" y="2" width="28" height="28" rx="5" fill="#b30b00" stroke="none" /><path d="M8 23c4-1 9-9 8-15 0 7 5 12 9 11-5-1-11 0-17 4z" /></Svg>, "split"],
  ["Inkscape", <Svg key="i" stroke="none"><path d="M16 2l14 14-6 5 2 3-5 2-4 5-6-6 3-4L2 16z" fill="#0a0a0a" /><path d="M16 4l7 8-4 3-3-2-4 3-3-4z" fill="#e6e9f4" /><path d="M23 12l4 4-7 2z" fill="#5a78c8" /><path d="M13 22l5 1-3 3z" fill="#5d8a94" /></Svg>, "split"],
  ["Calculator", <Svg key="k" stroke="none"><rect x="5" y="1" width="23" height="30" fill="#6f7d87" /><rect x="8" y="3" width="17" height="6" fill="#35c6f4" /><g fill="#e3e7ea"><path d="M8 12h5v5H8zM14 12h5v5h-5zM20 12h5v5h-5zM8 18h5v5H8zM14 18h5v5h-5zM8 24h5v5H8zM14 24h5v5h-5z" /></g><path d="M20 18h5v11h-5z" fill="#164a9c" /></Svg>],
  ["Fusion 360", <FusionIcon key="f" />, "active"],
  ["Zoom", <Svg key="z" stroke="none"><rect x="1" y="1" width="30" height="30" rx="10" fill="#4a8cff" /><rect x="7" y="11" width="12" height="10" rx="2" fill="#fff" /><path d="M20 14l5-3v10l-5-3z" fill="#fff" /></Svg>, "split"],
];

const docTabs = [["FINAL sonntag pack v3*", true], ["nez v1*"], ["FINAL sonntag pack_rjel v1*"], ["Untitled"]];
const groups = [
  ["MAKE", 126, [MakeIcon]], ["NEST", 128, [NestIcon]], ["ADD-INS", 158, [AddinsIcon]], ["UTILITY", 194, [LightIcon, SheetIcon]],
  ["INSPECT", 538, [MeasureIcon, InterfereIcon, CurvatureIcon, DraftIcon, SectionIcon, ShapesIcon]],
  ["SELECT", 148, [SelectIcon]], ["POSITION", 194, [CaptureIcon, RevertIcon]],
];

export default function App() {
  return (
    <Page>
      <Global />
      <TitleBar>
        <FusionIcon />
        <AppTitle>Autodesk Fusion 360 (Education License)</AppTitle>
        <WindowButton aria-label="Minimize"><Svg s={20} vb="0 0 20 20"><path d="M0 10h20" /></Svg></WindowButton>
        <WindowButton aria-label="Restore"><Svg s={20} vb="0 0 20 20"><path d="M1 5h14v14H1zM5 5V1h14v14h-4" /></Svg></WindowButton>
        <WindowButton aria-label="Close"><Svg s={20} vb="0 0 20 20"><path d="M1 1l18 18M19 1L1 19" /></Svg></WindowButton>
      </TitleBar>

      <TabRow>
        <QuickTools>
          <ToolSlot $w={66} aria-label="Data panel"><Svg stroke="none" fill="currentColor"><path d="M2 2h8v8H2zM12 2h8v8h-8zM22 2h8v8h-8zM2 12h8v8H2zM12 12h8v8h-8zM22 12h8v8h-8zM2 22h8v8H2zM12 22h8v8h-8zM22 22h8v8h-8z" /></Svg></ToolSlot>
          <ToolSlot $w={90} aria-label="File"><Svg stroke="none" fill="currentColor"><path d="M2 0h16v10h10v22H2zM20 0l8 8h-8z" /></Svg><Caret $color="#646464" /></ToolSlot>
          <ToolSlot $w={66} aria-label="Save"><Svg stroke="none" fill="currentColor"><path fillRule="evenodd" d="M2 2h25l3 3v25H2zM8 3v10h16V3zM11 20v9h10v-9zM17 4h4v7h-4zM15 23h3v6h-3z" /></Svg></ToolSlot>
          <ToolSlot $w={80} $gap={10} aria-label="Undo"><Svg strokeWidth="4"><path d="M27 28c0-9-6-15-18-14" /><path d="M14 4L4 14l10 10" /></Svg><Caret $color="#646464" /></ToolSlot>
          <ToolSlot $w={60} $gap={8} $dim aria-label="Redo"><Svg strokeWidth="4"><path d="M5 28c0-9 6-15 18-14" /><path d="M18 4l10 10-10 10" /></Svg><Caret $color="#646464" /></ToolSlot>
        </QuickTools>
        <Tabs>
          {docTabs.map(([name, active]) => (
            <DocTab key={name} $active={active}>
              <DocName><CubeIcon dim={!active} />{name}</DocName>
              <TabClose aria-label={`Close ${name}`}><CloseIcon /></TabClose>
            </DocTab>
          ))}
          <NewTab aria-label="New tab"><Svg s={26} vb="0 0 26 26" strokeWidth="5"><path d="M13 0v26M0 13h26" /></Svg></NewTab>
        </Tabs>
        <Status>
          <StatusButton aria-label="Comments"><Svg stroke="none"><path d="M0 2h32v21h-3v8l-9-8H0z" fill="#5f5f5f" /><path d="M4 8h24M4 13h24M4 18h16" stroke="#e4e4e4" strokeWidth="2" /></Svg></StatusButton>
          <StatusButton aria-label="Extensions"><Svg stroke="none"><circle cx="16" cy="16" r="16" fill="#5f5f5f" /><path d="M6 21c-3-7 1-12 5-13 2 4 3 4 5 3l5-6 3 2-4 6 6-2 2 3-6 3 5 1c-1 7-8 10-14 6l-3 3z" fill="#cbcbcb" /></Svg></StatusButton>
          <StatusButton $w={100}><Svg><circle cx="16" cy="16" r="15" /><circle cx="16" cy="16" r="11" fill="currentColor" /><path d="M16 9v8h8" stroke="#ddd" /></Svg>1</StatusButton>
          <StatusButton aria-label="Notifications"><Svg stroke="none" fill="currentColor"><path d="M16 0l2 3c7 2 6 9 7 15 0 4 2 5 5 8H2c3-3 5-4 5-8 1-6 0-13 7-15zM12 28h8l-4 4z" /></Svg></StatusButton>
          <StatusButton aria-label="Help"><Svg><circle cx="16" cy="16" r="16" fill="currentColor" stroke="none" /><path d="M11 12c0-7 11-7 10 0 0 4-5 4-5 8M16 23v4" stroke="#d8d8d8" strokeWidth="4" /></Svg></StatusButton>
          <Avatar>HA</Avatar>
        </Status>
      </TabRow>

      <Ribbon>
        <Workspace>DESIGN<Caret /></Workspace>
        <RibbonMain>
          <RibbonTabs>
            {["SOLID", "SURFACE", "SHEET METAL", "TOOLS"].map((t) => <RibbonTab key={t} $active={t === "TOOLS"}>{t}</RibbonTab>)}
          </RibbonTabs>
          <Groups>
            {groups.map(([name, w, icons]) => (
              <Group key={name} $w={w} $last={name === "POSITION"}>
                <GroupIcons>
                  {icons.map((Icon, i) => <IconButton key={i} $selected={name === "SELECT"} aria-label={`${name} ${i + 1}`}><Icon /></IconButton>)}
                </GroupIcons>
                <GroupLabel $wide={icons.length > 1}>{name}<Caret /></GroupLabel>
              </Group>
            ))}
          </Groups>
        </RibbonMain>
      </Ribbon>

      <Canvas>
        <Workpiece />
        <ViewCube />
        <BrowserPanel>
          <PanelHead>
            <HeadSlot $w={40} aria-label="Collapse"><Svg w={20} h={12} vb="0 0 20 12" stroke="none" fill="currentColor"><path d="M10 0v12L0 6zM20 0v12L10 6z" /></Svg></HeadSlot>
            <PanelTitle>BROWSER</PanelTitle>
            <HeadSlot $w={32} aria-label="Minimize browser"><Svg s={18} vb="0 0 18 18"><circle cx="9" cy="9" r="9" fill="currentColor" stroke="none" /><path d="M4 9h10" stroke="#fff" /></Svg></HeadSlot>
            <Grip />
          </PanelHead>
          <TreeRow>
            <HeadSlot $w={22} aria-label="Expand"><Svg w={22} h={30} vb="0 0 22 30"><path d="M3 2l16 13L3 28z" fill="#e4e4e4" stroke="#222" strokeWidth="2.5" /></Svg></HeadSlot>
            <Node>
              <Stripe />
              <Svg><path d="M0 16Q16-4 32 16 16 36 0 16z" fill="#999" stroke="none" /><circle cx="16" cy="16" r="6" stroke="#e8e8e8" strokeWidth="3" /></Svg>
              <NodeName><Svg stroke="#333"><path d="M1 31V7l5-6h12v14h13v12l-4 4z" fill="#f2f5f6" /><path d="M1 18h12v13M14 18l4-4h13l-4 5H14M13 18V7l5-6" stroke="#aab" strokeWidth="1.500" /></Svg>FINAL sonntag pack v3</NodeName>
              <Svg s={26} vb="0 0 26 26"><circle cx="13" cy="13" r="11.500" stroke="#333" fill="#fafafa" /><circle cx="13" cy="13" r="5" fill="#222" stroke="none" /></Svg>
            </Node>
          </TreeRow>
        </BrowserPanel>
        <CommentsPanel>
          <PanelHead $flat>
            <HeadSlot as="span" $w={40} />
            <PanelTitle>COMMENTS</PanelTitle>
            <HeadSlot $w={32} aria-label="Expand comments"><Svg s={18} vb="0 0 18 18"><circle cx="9" cy="9" r="9" fill="currentColor" stroke="none" /><path d="M4 9h10M9 4v10" stroke="#fff" /></Svg></HeadSlot>
            <Grip />
          </PanelHead>
        </CommentsPanel>
        <NavBar>
          <NavButton $w={64} $gap={10} aria-label="Orbit"><Svg stroke="#444"><ellipse cx="15" cy="16" rx="6" ry="15" strokeDasharray="26 4" /><path d="M9 10C-2 12-2 19 8 22M21 9q12 4 9 10l-9 4M25 17v6h7" /><path d="M15 11v8M11 15h8" stroke="#0b78d0" strokeWidth="3" /></Svg><Caret /></NavButton>
          <NavButton $w={53} aria-label="Look at"><Svg stroke="#444"><rect x="1" y="11" width="30" height="20" fill="#fff" /><rect x="7" y="17" width="18" height="9" fill="#b8bcc6" /><path d="M4 10q5-8 12-6M12 10q6-6 12-6M21 2v6" /></Svg></NavButton>
          <NavButton $w={52} aria-label="Pan"><Svg stroke="#555"><path d="M11 31q-2-6-9-13 0-4 5 0l3 3L7 6q2-4 4 0l3 9V3q2-4 4 0l1 11 3-10q3-3 4 1l-2 11 3-5q4-2 3 2-1 12-7 18z" fill="#f8f8f8" /></Svg></NavButton>
          <NavButton $w={52} aria-label="Zoom"><Svg stroke="#555"><circle cx="11" cy="13" r="9" fill="#e6f0f4" /><path d="M17 20l8 9" strokeWidth="5" stroke="#333" /><path d="M23 5h9M27 0v9M23 14h9" stroke="#222" /></Svg></NavButton>
          <NavButton $w={67} $gap={10} aria-label="Fit"><Svg stroke="#555"><path d="M1 1h30v30H1z" strokeDasharray="4 4" /><circle cx="14" cy="13" r="12" fill="#dcebf0" /><path d="M22 22l8 8" strokeWidth="5" stroke="#333" /></Svg><Caret /></NavButton>
          <NavButton $w={62} aria-label="Display settings"><Svg stroke="#555"><rect x="1" y="1" width="30" height="24" fill="#fff" /><rect x="6" y="5" width="20" height="15" fill="#9dbfe2" stroke="#3a68a8" /><path d="M10 25v5h13v-5" /></Svg><Caret /></NavButton>
          <NavButton $w={62} aria-label="Grid"><Svg stroke="#666"><rect x="1" y="1" width="30" height="30" fill="#fff" /><path d="M7 1v30M13 1v30M19 1v30M25 1v30M1 7h30M1 13h30M1 19h30M1 25h30" /></Svg><Caret /></NavButton>
          <NavButton $w={50} aria-label="Viewports"><Svg stroke="#2a4a80" fill="#a5c2e6"><path d="M1 4h13v11H1zM17 4h13v11H17zM1 17h13v12H1zM17 17h13v12H17z" /><path d="M5 7h5v5H5zM21 7h5v5h-5zM5 20h5v5H5zM21 20h5v5h-5z" stroke="#6c92c8" /></Svg><Caret /></NavButton>
        </NavBar>
      </Canvas>

      <Timeline>
        <ScrollRow><Thumb /></ScrollRow>
        <TimelineBody>
          <Playback>
            {[
              ["Start", "M0 2h3v28H0zM26 2v28L4 16z"], ["Back", "M18 2v28L0 16zM21 8h4v17h-4z"], ["Play", "M2 0l24 16L2 32z"],
              ["Forward", "M0 8h4v17H0zM7 2v28l18-14z"], ["End", "M0 2v28l22-14zM23 2h3v28h-3z"],
            ].map(([n, d]) => (
              <PlayButton key={n} aria-label={n}><Svg w={26} h={32} vb="0 0 26 32" stroke="none" fill="currentColor"><path d={d} /></Svg></PlayButton>
            ))}
          </Playback>
          <Track>
            <Bars>
              <Bar $span={1} $fill="#e38fe3" />
              <Bar $span={2} $fill="#e8774c" />
              <Bar $span={1} $fill="repeating-linear-gradient(90deg, #e38fe3 0 8px, #e8774c 8px 12px)" />
              <Bar $span={45} $fill="#e38fe3" />
            </Bars>
            <Features>
              {featureKinds.map((k, i) => <Feature key={i} aria-label={`${k} ${i + 1}`}><Svg>{glyphs[k]}</Svg></Feature>)}
            </Features>
            <Axis>
              {featureKinds.map((k, i) => <AxisCell key={i}>{k === "pattern" ? <Expand>+</Expand> : <Tick />}</AxisCell>)}
            </Axis>
          </Track>
          <Settings aria-label="Timeline settings">
            <Svg strokeWidth="5"><circle cx="16" cy="16" r="8" strokeWidth="6" /><path d="M16 0v6M16 26v6M0 16h6M26 16h6M5 5l4 4M23 23l4 4M5 27l4-4M23 9l4-4" /></Svg>
          </Settings>
        </TimelineBody>
      </Timeline>

      <TaskBar>
        <Peek><PeekScreen>matrix</PeekScreen></Peek>
        <TaskView aria-label="Task view"><Svg><path d="M1 1v4h20V1M1 31v-4h20v4M3 10h16v12H3zM29 1v6M29 17v14" /><circle cx="29" cy="12" r="3" fill="#fff" stroke="none" /></Svg></TaskView>
        <Apps>
          {apps.map(([name, logo, mode]) => (
            <AppButton key={name} aria-label={name} $bg={mode === "orange" ? "linear-gradient(90deg, #a55b47 72%, #9c532f 74%)" : mode === "active" ? "#47468f" : undefined}>
              {logo}
              <Runner $split={mode === "split"} $wide={mode === "orange" || mode === "active"} $color={mode === "orange" ? "#ff7300" : undefined} />
            </AppButton>
          ))}
        </Apps>
        <Tray>
          <TrayButton aria-label="Hidden icons"><Svg s={26} vb="0 0 26 26"><path d="M1 19L13 6l12 13" /></Svg></TrayButton>
          <TrayButton $w={62} aria-label="Microphone"><Svg><rect x="9" y="0" width="14" height="24" rx="6" fill="#fff" stroke="none" /><path d="M6 16v5q0 5 5 5h10q5 0 5-5v-5M16 26v5M11 31h10" /></Svg></TrayButton>
          <TrayButton aria-label="Muted"><Svg><path d="M2 11h5l7-7v24l-7-7H2zM19 12l9 9M28 12l-9 9" /></Svg></TrayButton>
          <TrayButton $w={68} aria-label="Wi-Fi"><Svg><path d="M4 30C5 16 14 8 29 7M10 30c1-9 8-15 19-16M17 30c1-5 5-8 12-9" /><circle cx="27" cy="27" r="3" fill="#fff" stroke="none" /></Svg></TrayButton>
          <TrayButton aria-label="Battery"><Svg><path d="M1 8h26v17H1zM28 13h3v7h-3M7 12v9" /></Svg></TrayButton>
          <TrayButton aria-label="OneDrive"><Svg stroke="none"><path d="M8 12a9 9 0 0118 2l-8 12H8q-8-2-8-7t8-7z" fill="#0a78d4" /><path d="M0 19q0-7 8-7l10 14H8q-8-1-8-7z" fill="#28a0e8" /><circle cx="23" cy="23" r="9" fill="#fff" /><path d="M18 22a5 5 0 019-2M28 24a5 5 0 01-9 2M27 16v4h-4M19 30v-4h4" stroke="#0a68c4" strokeWidth="2" /></Svg></TrayButton>
          <TrayButton $w={62} aria-label="Pen"><Svg><path d="M10 24l2-8L23 3q4-3 5 2L17 19zM10 19q-8-2-9 5 1 8 9 5 4-4 4-9M22 18h8q3-4-2-7" /></Svg></TrayButton>
          <TrayButton $w={66} aria-label="Keyboard"><Svg w={46} h={28} vb="0 0 46 28"><path d="M1 2h44v24H1z" /><path d="M6 8h34M6 14h34" strokeDasharray="3 2" /><path d="M6 20h4M13 20h20M36 20h4" /></Svg></TrayButton>
          <TrayButton $w={60} aria-label="Touchpad"><Svg><path d="M1 4h30v24H1zM1 19h30M16 19v9" /></Svg></TrayButton>
          <TrayButton $w={80}>FRA</TrayButton>
          <TrayButton $w={130} $clock>오전 10:30</TrayButton>
          <TrayButton $w={86} aria-label="Notifications"><Svg stroke="none"><path d="M0 0h32v18l-8 8h-6l-6 5v-5H0z" fill="#fff" /><path d="M5 7h22M5 13h22M5 19h12" stroke="#1e2549" strokeWidth="2" /><circle cx="25" cy="25" r="8" fill="#1e2549" /><path d="M20 28q8 0 7-9 5 3 3 8-4 6-10 1z" fill="#fff" /></Svg></TrayButton>
          <ShowDesktop aria-label="Show desktop" />
        </Tray>
      </TaskBar>
    </Page>
  );
}
